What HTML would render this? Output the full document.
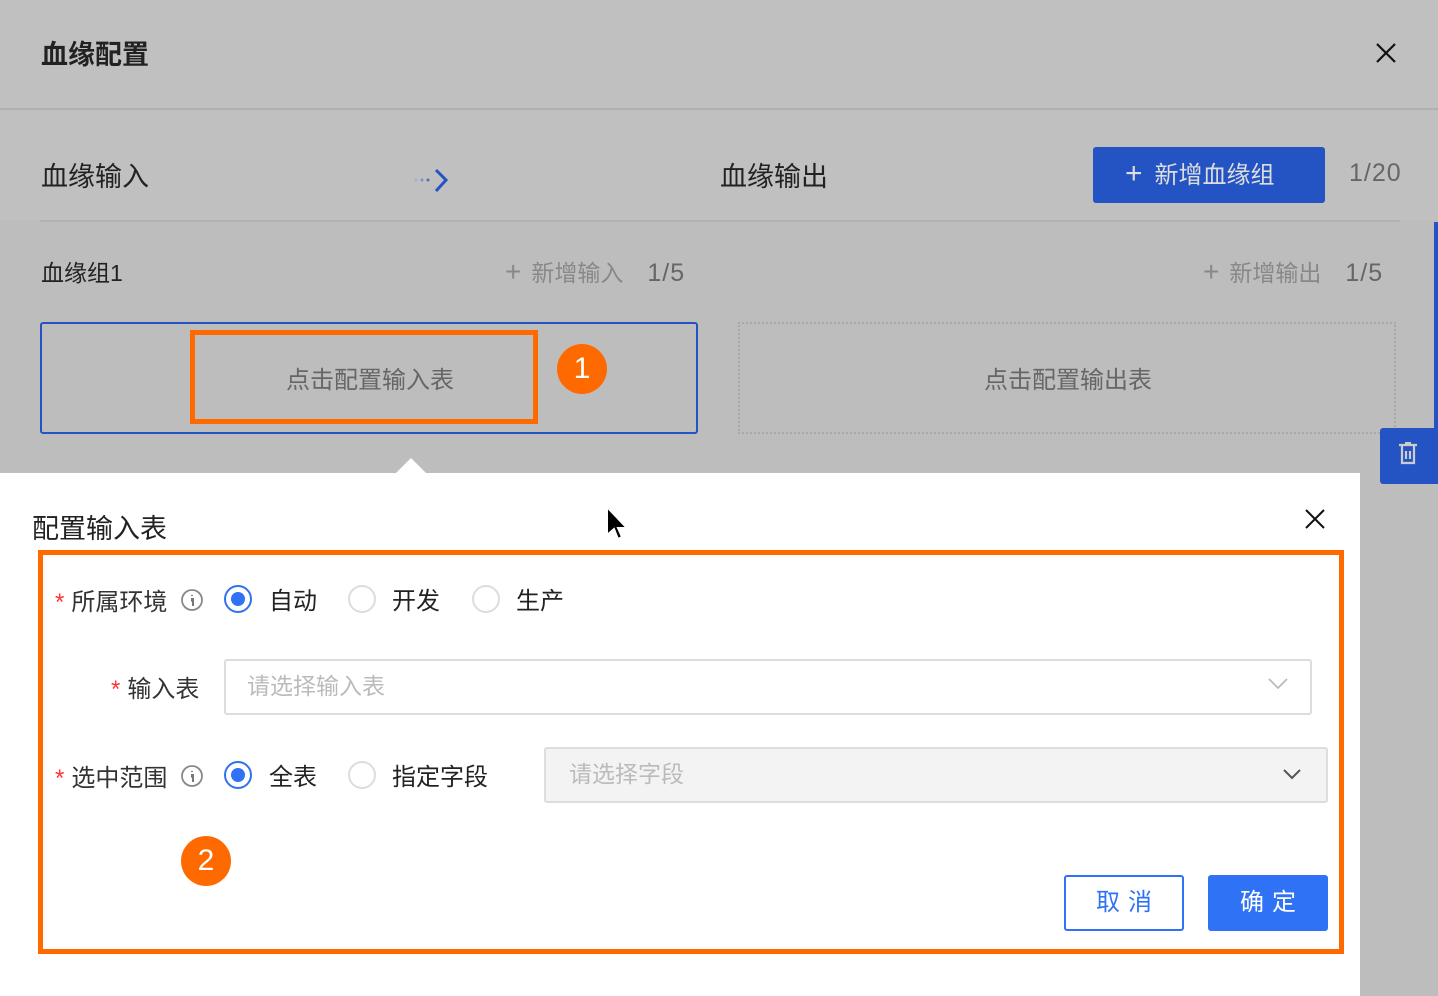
<!DOCTYPE html>
<html><head><meta charset="utf-8"><style>
*{margin:0;padding:0;box-sizing:border-box}
body{width:1438px;height:996px;overflow:hidden;background:#bdbdbd;font-family:"Liberation Sans","Noto Sans CJK SC",sans-serif;position:relative}
.a{position:absolute;white-space:nowrap}
</style></head><body>
<div class="a" style="left:0;top:0;width:1438px;height:220px;background:#c0c0c0"></div>
<div class="a" style="left:0;top:108px;width:1438px;height:2px;background:#b0b0b0"></div>
<div class="a" style="left:41px;top:33px;font-size:27px;font-weight:bold;color:#222">血缘配置</div>
<svg class="a" style="left:1375px;top:42px" width="22" height="22"><path d="M2 2L20 20M20 2L2 20" stroke="#111" stroke-width="2.2"/></svg>
<div class="a" style="left:41px;top:155px;font-size:27px;color:#222">血缘输入</div>
<svg class="a" style="left:412px;top:166px" width="40" height="30"><circle cx="4" cy="14" r="1.5" fill="#a0b0d8"/><circle cx="10" cy="14" r="1.5" fill="#7a92d0"/><circle cx="16" cy="14" r="1.5" fill="#4a6cc8"/><path d="M24 4L34 14L24 25" stroke="#2454c4" stroke-width="3" fill="none"/></svg>
<div class="a" style="left:720px;top:155px;font-size:27px;color:#222">血缘输出</div>
<div class="a" style="left:1093px;top:147px;width:232px;height:56px;background:#2454c4;border-radius:3px;color:#ddd;font-size:24px;line-height:54px;padding-left:32px"><span style="font-size:30px;font-weight:300;margin-right:12px">+</span>新增血缘组</div>
<div class="a" style="left:1349px;top:159px;font-size:25px;color:#666;letter-spacing:1px">1/20</div>
<div class="a" style="left:40px;top:220px;width:1360px;height:2px;background:#b2b2b2"></div>
<div class="a" style="left:1434px;top:222px;width:4px;height:210px;background:#2454c4"></div>
<div class="a" style="left:41px;top:254px;font-size:23px;color:#222">血缘组1</div>
<div class="a" style="left:505px;top:254px;font-size:23px;color:#888"><span style="font-size:28px;font-weight:300;margin-right:10px">+</span>新增输入<span style="color:#666;margin-left:24px;font-size:25px;letter-spacing:1px">1/5</span></div>
<div class="a" style="left:1203px;top:254px;font-size:23px;color:#888"><span style="font-size:28px;font-weight:300;margin-right:10px">+</span>新增输出<span style="color:#666;margin-left:24px;font-size:25px;letter-spacing:1px">1/5</span></div>
<div class="a" style="left:40px;top:322px;width:658px;height:112px;border:2px solid #2454c4;border-radius:3px"></div>
<div class="a" style="left:190px;top:330px;width:348px;height:94px;border:5px solid #ff6a00"></div>
<div class="a" style="left:286px;top:360px;font-size:24px;color:#666">点击配置输入表</div>
<div class="a" style="left:557px;top:344px;width:50px;height:50px;border-radius:50%;background:#ff6a00;color:#fff;font-size:30px;text-align:center;line-height:50px">1</div>
<div class="a" style="left:738px;top:322px;width:658px;height:112px;border:2px dotted #a8a8a8"></div>
<div class="a" style="left:984px;top:360px;font-size:24px;color:#666">点击配置输出表</div>
<div class="a" style="left:1380px;top:428px;width:58px;height:56px;background:#2454c4;border-radius:3px 0 0 3px"></div>
<svg class="a" style="left:1397px;top:442px" width="22" height="24"><path d="M2 3H20M5 3V21H17V3M9 9V17M13 9V17M8 1H14" stroke="#ccc" stroke-width="2.2" fill="none"/></svg>
<div class="a" style="left:0;top:473px;width:1360px;height:523px;background:#fff"></div>
<div class="a" style="left:396px;top:458px;width:0;height:0;border-left:15px solid transparent;border-right:15px solid transparent;border-bottom:15px solid #fff"></div>
<div class="a" style="left:32px;top:507px;font-size:27px;color:#222">配置输入表</div>
<svg class="a" style="left:1304px;top:508px" width="22" height="22"><path d="M2 2L20 20M20 2L2 20" stroke="#111" stroke-width="2"/></svg>
<svg class="a" style="left:603px;top:505px" width="24" height="38"><path d="M4 2V30L11 24L15 34L19 32L15 23H24Z" fill="#000" stroke="#fff" stroke-width="2"/></svg>
<div class="a" style="left:38px;top:550px;width:1306px;height:404px;border:5px solid #ff6a00"></div>
<div class="a" style="left:55px;top:582px;font-size:24px;color:#333"><span style="color:#f33;margin-right:7px">*</span>所属环境</div>
<svg class="a" style="left:180px;top:588px" width="24" height="24"><circle cx="12" cy="12" r="10" stroke="#888" stroke-width="1.8" fill="none"/><path d="M12 7V8M11 11H13V18" stroke="#777" stroke-width="2"/></svg>
<div class="a" style="left:224px;top:585px;width:28px;height:28px;border-radius:50%;border:2px solid #2f72f5;background:#fff"><div style="margin:5px;width:14px;height:14px;border-radius:50%;background:#2f72f5"></div></div>
<div class="a" style="left:269px;top:581px;font-size:24px;color:#222">自动</div>
<div class="a" style="left:348px;top:585px;width:28px;height:28px;border-radius:50%;border:2px solid #ddd"></div>
<div class="a" style="left:392px;top:581px;font-size:24px;color:#222">开发</div>
<div class="a" style="left:472px;top:585px;width:28px;height:28px;border-radius:50%;border:2px solid #ddd"></div>
<div class="a" style="left:516px;top:581px;font-size:24px;color:#222">生产</div>
<div class="a" style="left:111px;top:669px;font-size:24px;color:#333"><span style="color:#f33;margin-right:7px">*</span>输入表</div>
<div class="a" style="left:224px;top:659px;width:1088px;height:56px;border:2px solid #ddd;border-radius:3px;font-size:23px;color:#bbb;line-height:50px;padding-left:21px">请选择输入表</div>
<svg class="a" style="left:1267px;top:677px" width="22" height="14"><path d="M2 2L11 11L20 2" stroke="#bbb" stroke-width="1.8" fill="none"/></svg>
<div class="a" style="left:55px;top:758px;font-size:24px;color:#333"><span style="color:#f33;margin-right:7px">*</span>选中范围</div>
<svg class="a" style="left:180px;top:764px" width="24" height="24"><circle cx="12" cy="12" r="10" stroke="#888" stroke-width="1.8" fill="none"/><path d="M12 7V8M11 11H13V18" stroke="#777" stroke-width="2"/></svg>
<div class="a" style="left:224px;top:761px;width:28px;height:28px;border-radius:50%;border:2px solid #2f72f5"><div style="margin:5px;width:14px;height:14px;border-radius:50%;background:#2f72f5"></div></div>
<div class="a" style="left:269px;top:757px;font-size:24px;color:#222">全表</div>
<div class="a" style="left:348px;top:761px;width:28px;height:28px;border-radius:50%;border:2px solid #ddd"></div>
<div class="a" style="left:392px;top:757px;font-size:24px;color:#222">指定字段</div>
<div class="a" style="left:544px;top:747px;width:784px;height:56px;border:2px solid #ddd;border-radius:3px;background:#f3f3f3;font-size:23px;color:#bbb;line-height:50px;padding-left:23px">请选择字段</div>
<svg class="a" style="left:1282px;top:768px" width="20" height="12"><path d="M2 2L10 10L18 2" stroke="#555" stroke-width="2" fill="none"/></svg>
<div class="a" style="left:181px;top:836px;width:50px;height:50px;border-radius:50%;background:#ff6a00;color:#fff;font-size:30px;text-align:center;line-height:50px">2</div>
<div class="a" style="left:1064px;top:875px;width:120px;height:56px;border:2px solid #2f72f5;border-radius:3px;color:#2f72f5;font-size:24px;text-align:center;line-height:52px;letter-spacing:8px;padding-left:8px">取消</div>
<div class="a" style="left:1208px;top:875px;width:120px;height:56px;background:#2f72f5;border-radius:3px;color:#fff;font-size:24px;text-align:center;line-height:56px;letter-spacing:8px;padding-left:8px">确定</div>
</body></html>
